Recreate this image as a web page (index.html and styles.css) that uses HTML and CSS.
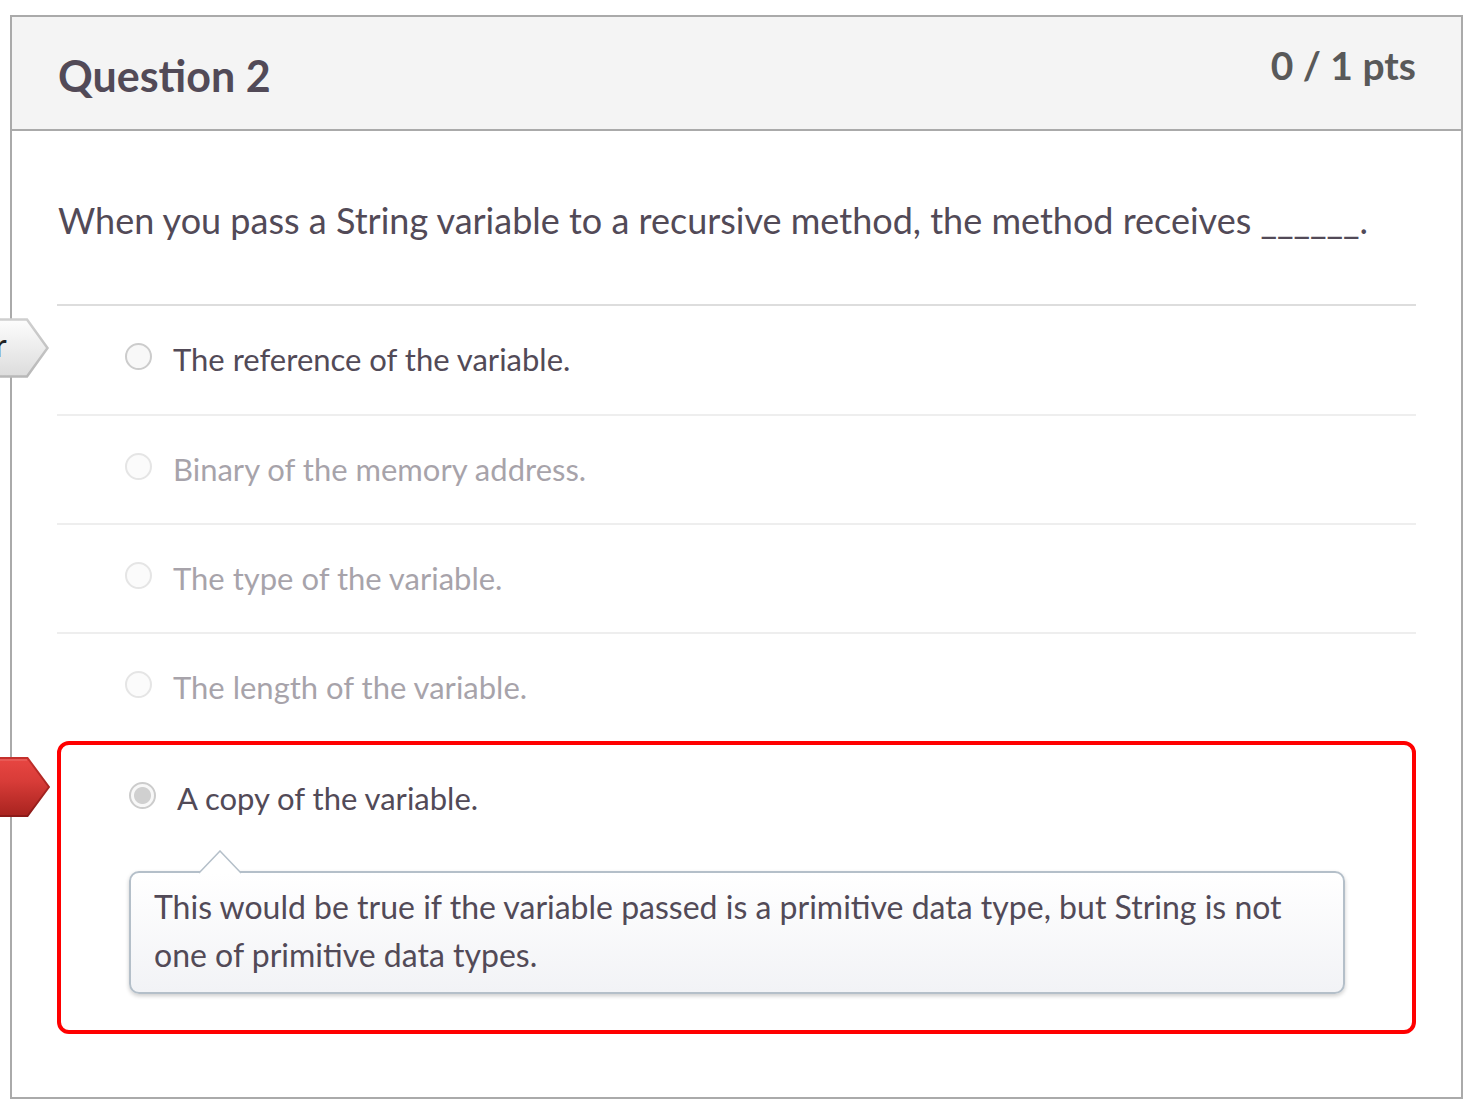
FILE: index.html
```html
<!DOCTYPE html>
<html lang="en">
<head>
<meta charset="utf-8">
<title>Question 2</title>
<link rel="stylesheet" href="styles.css">
</head>
<body>
<main class="question">
  <header class="question-header">
    <h1 class="question-name">Question 2</h1>
    <div class="question-points">0 / 1 pts</div>
  </header>
  <form class="question-body">
    <p class="question-text" id="prompt">When you pass a String variable to a recursive method, the method receives ______.</p>
    <div class="answers" role="radiogroup" aria-labelledby="prompt">
      <div class="answer answer-correct">
        <div class="flag flag-correct">
          <svg class="flag-shape" width="50" height="62" viewBox="0 0 50 62" aria-hidden="true">
            <defs>
              <linearGradient id="grey" x1="0" y1="0" x2="0" y2="1"><stop offset="0" stop-color="#fdfdfd"/><stop offset="1" stop-color="#dcdcdc"/></linearGradient>
              <linearGradient id="grey-edge" x1="0" y1="0" x2="0" y2="1"><stop offset="0" stop-color="#cfcfcf"/><stop offset="1" stop-color="#b8b8b8"/></linearGradient>
            </defs>
            <path d="M-4 2.500H27L47.500 31L27 59.500H-4Z" fill="url(#grey)" stroke="url(#grey-edge)" stroke-width="2.500"/>
          </svg>
          <span class="flag-text">r</span>
        </div>
        <label class="choice"><input class="radio" type="radio" name="answer" disabled><span>The reference of the variable.</span></label>
      </div>
      <div class="answer answer-dim">
        <label class="choice"><input class="radio" type="radio" name="answer" disabled><span>Binary of the memory address.</span></label>
      </div>
      <div class="answer answer-dim">
        <label class="choice"><input class="radio" type="radio" name="answer" disabled><span>The type of the variable.</span></label>
      </div>
      <div class="answer answer-dim">
        <label class="choice"><input class="radio" type="radio" name="answer" disabled><span>The length of the variable.</span></label>
      </div>
      <div class="answer answer-wrong">
        <div class="flag flag-wrong">
          <svg class="flag-shape" width="50" height="62" viewBox="0 0 50 62" aria-hidden="true">
            <defs>
              <linearGradient id="red" x1="0" y1="0" x2="0" y2="1"><stop offset="0" stop-color="#e84642"/><stop offset=".4" stop-color="#d83c38"/><stop offset="1" stop-color="#a8231f"/></linearGradient>
              <linearGradient id="red-edge" x1="0" y1="0" x2="0" y2="1"><stop offset="0" stop-color="#c4302c"/><stop offset="1" stop-color="#8c1a18"/></linearGradient>
            </defs>
            <path d="M-4 2H27.500L49 31L27.500 60H-4Z" fill="url(#red)" stroke="url(#red-edge)" stroke-width="2"/>
            <path d="M0 4H27" stroke="#e8605c" stroke-width="1.500"/>
          </svg>
        </div>
        <label class="choice"><input class="radio" type="radio" name="answer" checked disabled><span>A copy of the variable.</span></label>
        <div class="comment">
          <svg class="comment-tip" width="44" height="24" viewBox="0 0 44 24" aria-hidden="true"><path d="M1 23L22 1L43 23" fill="#fff" stroke="#b4bfc9" stroke-width="1.500"/></svg>
          <p class="comment-text">This would be true if the variable passed is a primitive data type, but String is not one of primitive data types.</p>
        </div>
      </div>
    </div>
  </form>
</main>
</body>
</html>
```
FILE: styles.css
```css
* { box-sizing: border-box; }
body {
  margin: 0;
  padding: 15px 19px 16px 10px;
  background: #fff;
  color: #524a57;
  font-family: Lato, sans-serif;
  font-size: 32px;
  line-height: 48px;
}
.question { border: 2px solid #aaa; }
.question-header {
  display: flex;
  justify-content: space-between;
  height: 114px;
  padding: 0 45px 0 46px;
  background: #f4f4f4;
  border-bottom: 2px solid #aaa;
  font-weight: 700;
}
.question-name { margin: 35px 0 0; font-size: 43px; line-height: 48px; }
.question-points { margin-top: 24px; color: #595959; font-size: 39px; }
.question-body { padding: 65px 45px 63px; }
.question-text { margin: 0; padding-left: 1px; font-size: 36px; }
.answers { margin-top: 60px; border-top: 2px solid #ddd; }
.answer { position: relative; padding: 29px 68px 31px; }
.answer-dim { height: 109px; border-top: 2px solid #eee; }
.answer-dim .choice { opacity: .5; }
.choice { display: flex; gap: 21px; font-size: 31px; }
.radio {
  appearance: none;
  width: 27px;
  height: 27px;
  margin: 8px 0 0;
  border: 2px solid #ccc;
  border-radius: 50%;
  background: #f8f8f8;
}
.radio:checked { background: radial-gradient(circle, #d0d0d0 8px, #f8f8f8 9px); }
.answer-wrong { padding-bottom: 36px; border: 4px solid #f00; border-radius: 12px; }
.comment {
  position: relative;
  margin: 49px -1px 0 0;
  padding: 10px 23px 13px;
  border: 2px solid #b4bfc9;
  border-radius: 10px;
  background: linear-gradient(#fff, #f2f3f6);
  box-shadow: 0 2px 4px #0003;
}
.comment-tip { position: absolute; left: 67px; top: -23px; }
.comment-text { margin: 0; }
.flag { position: absolute; left: -57px; top: 11px; width: 50px; height: 62px; overflow: hidden; }
.flag-wrong { left: -61px; }
.flag-shape { display: block; }
.flag-text { position: absolute; left: -5px; top: 4px; color: #222; font-size: 32px; }
```
